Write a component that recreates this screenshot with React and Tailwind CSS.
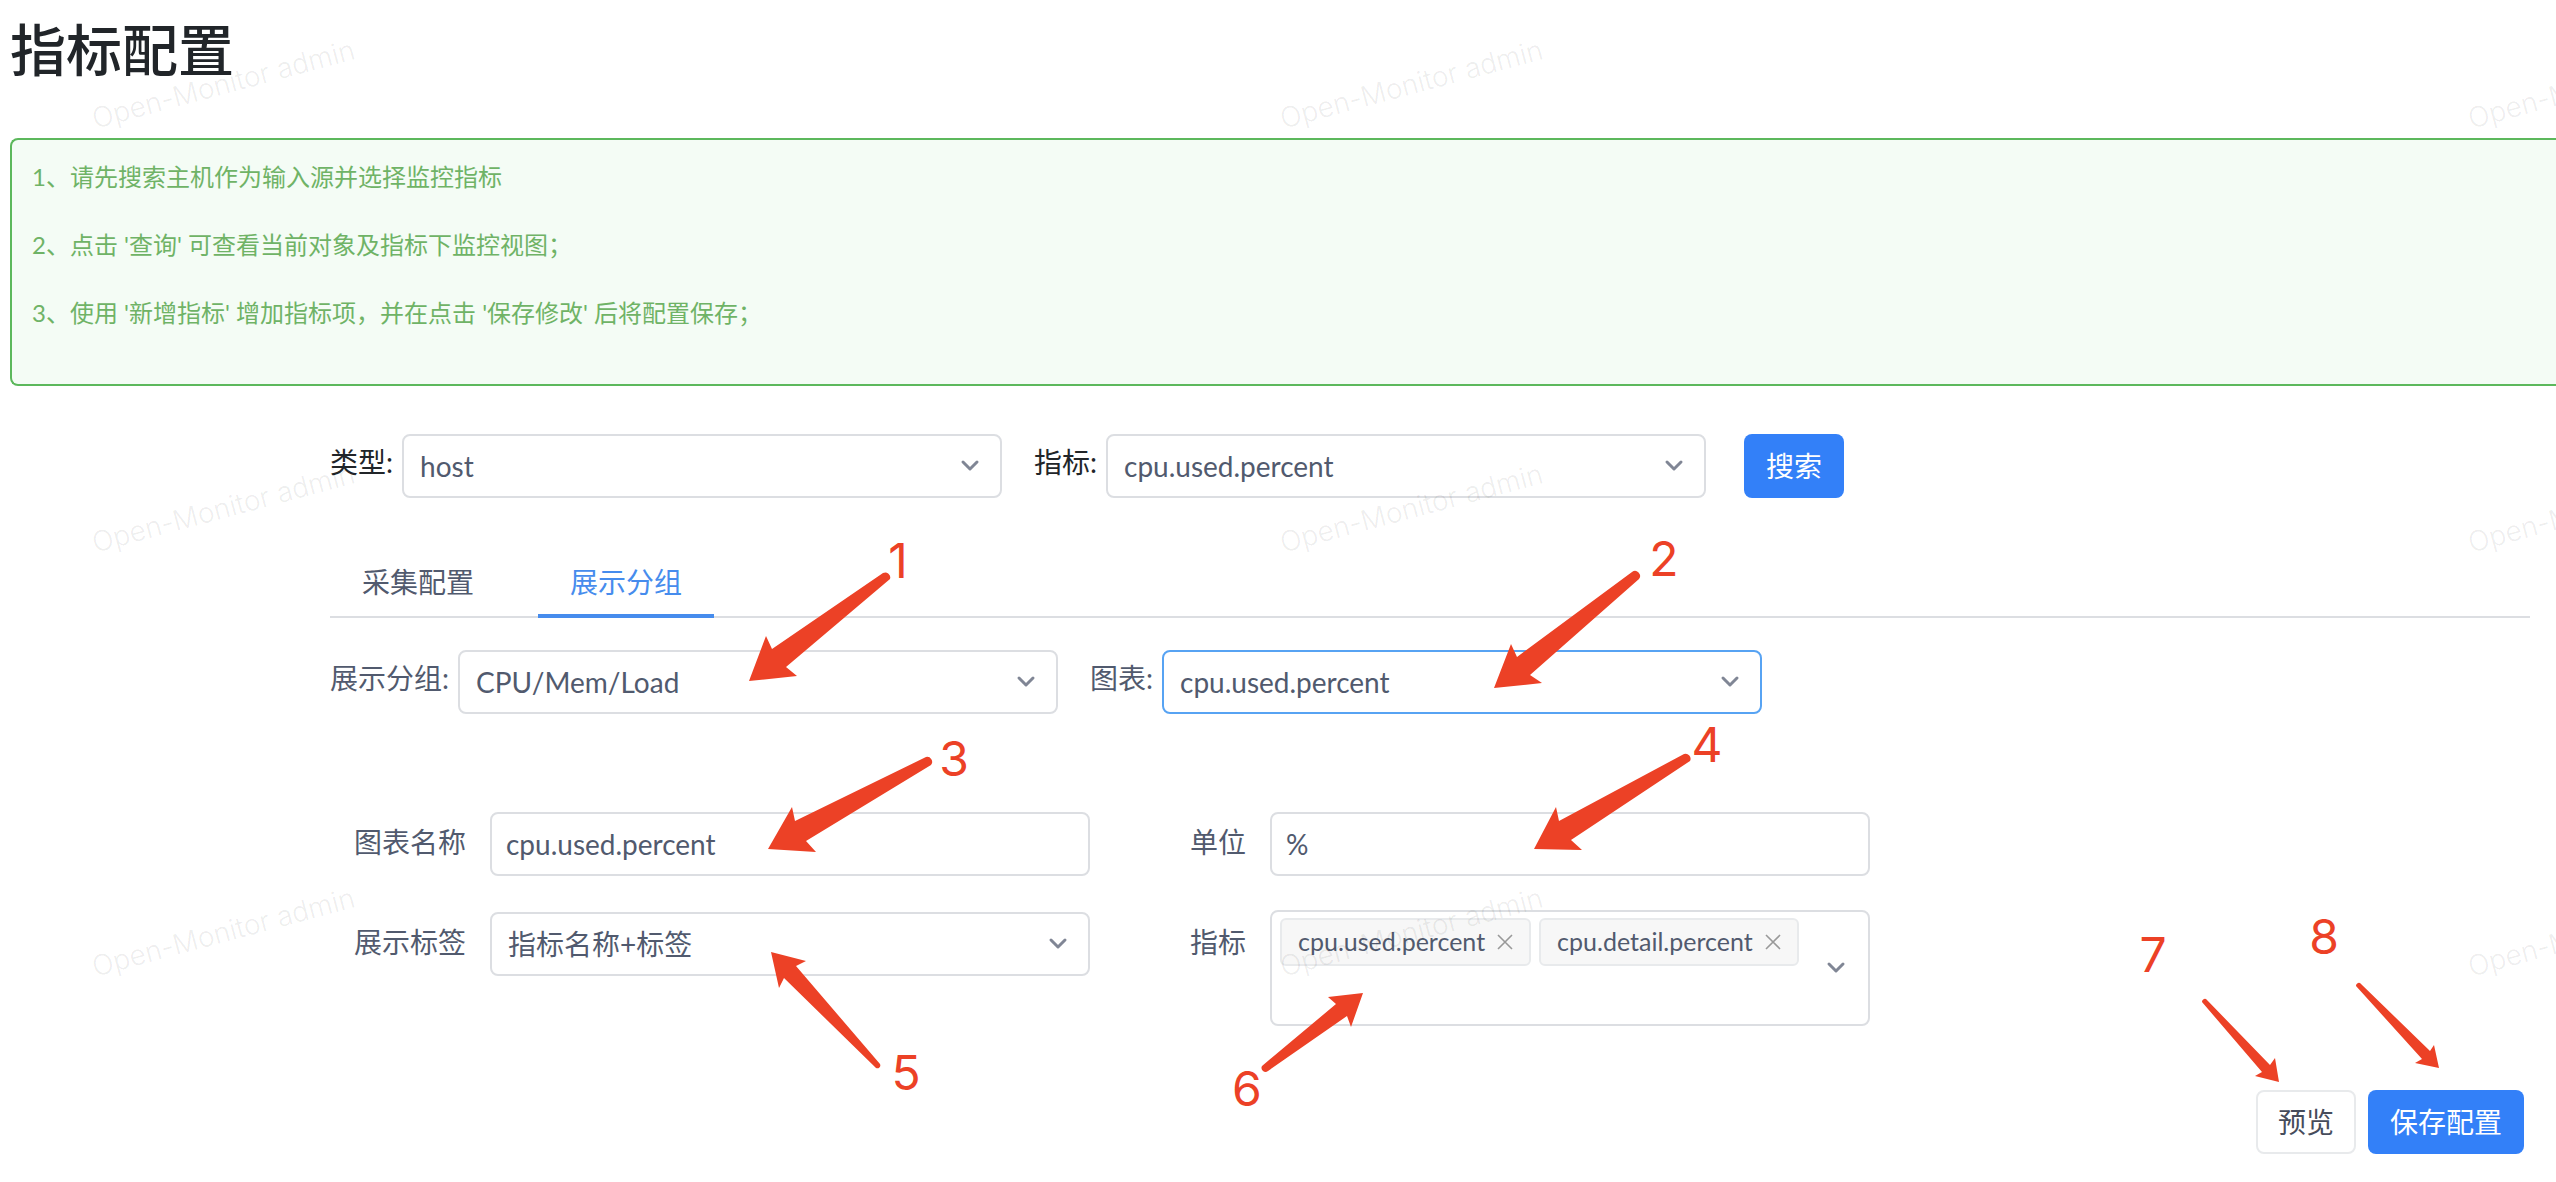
import { useState } from "react";

const hints = [
  "1、请先搜索主机作为输入源并选择监控指标",
  "2、点击 '查询' 可查看当前对象及指标下监控视图；",
  "3、使用 '新增指标' 增加指标项，并在点击 '保存修改' 后将配置保存；",
];

const arrows = [
  "M749 681 L766 636 L772 649 L883 573 A5 5 0 0 1 890 579 L786 667 L797 676 Z",
  "M1494 688 L1511 644 L1517 657 L1632 572 A5 5 0 0 1 1639 579 L1530 675 L1542 683 Z",
  "M768 849 L792 807 L795 821 L926 757 A5 5 0 0 1 931 765 L806 841 L816 852 Z",
  "M1534 849 L1556 807 L1559 821 L1684 754 A5 5 0 0 1 1690 761 L1571 840 L1582 850 Z",
  "M771 952 L806 961 L796 966 L880 1064 A3 3 0 0 1 876 1068 L784 978 L779 988 Z",
  "M1363 993 L1351 1027 L1347 1016 L1268 1071 A4 4 0 0 1 1262 1066 L1336 1004 L1328 997 Z",
  "M2279 1082 L2255 1076 L2262 1072 L2202 1002 A3 3 0 0 1 2206 999 L2270 1065 L2275 1058 Z",
  "M2439 1068 L2415 1063 L2422 1059 L2356 986 A3 3 0 0 1 2360 983 L2430 1051 L2434 1045 Z",
];

const marks = [
  [1, 898, 578],
  [2, 1664, 576],
  [3, 954, 776],
  [4, 1707, 762],
  [5, 906, 1090],
  [6, 1247, 1106],
  [7, 2153, 972],
  [8, 2324, 954],
];

function Chevron() {
  return (
    <svg
      className="pointer-events-none absolute top-1/2 right-[22px] h-4 w-5 -translate-y-1/2"
      viewBox="0 0 20 16"
      fill="none"
      stroke="#808695"
      strokeWidth="3"
      strokeLinecap="round"
      strokeLinejoin="round"
      aria-hidden="true"
    >
      <path d="M3 4 L10 11 L17 4" />
    </svg>
  );
}

function Select({ id, value, active }) {
  return (
    <div className="relative w-[600px]">
      <select
        id={id}
        defaultValue={value}
        className={
          "h-16 w-full appearance-none rounded-lg border-2 bg-white px-4 text-[28px] text-[#515a6e] outline-none " +
          (active ? "border-[#57a3f3]" : "border-[#dcdee2]")
        }
      >
        <option>{value}</option>
      </select>
      <Chevron />
    </div>
  );
}

function Tag({ text, onClose }) {
  return (
    <span className="flex h-12 items-center gap-3 rounded-md border-2 border-[#e8eaec] bg-[#f7f7f7] px-4 text-[25px] text-[#515a6e]">
      {text}
      <button type="button" aria-label={"移除 " + text} onClick={onClose}>
        <svg className="h-4 w-4" viewBox="0 0 16 16" stroke="#999" strokeWidth="1.6" aria-hidden="true">
          <path d="M1 1 L15 15 M15 1 L1 15" />
        </svg>
      </button>
    </span>
  );
}

function Watermark() {
  return (
    <div
      aria-hidden="true"
      className="pointer-events-none absolute inset-0 grid auto-rows-[424px] grid-cols-[repeat(3,1188px)] overflow-hidden"
    >
      {Array.from({ length: 9 }, (_, i) => (
        <div key={i} className="pt-[62px] pl-[88px]">
          <span className="inline-block -rotate-15 font-['Inter'] text-[28px] leading-10 font-light text-black/8">
            Open-Monitor admin
          </span>
        </div>
      ))}
    </div>
  );
}

function Annotations() {
  return (
    <svg
      className="pointer-events-none absolute top-0 left-0"
      width="2556"
      height="1182"
      viewBox="0 0 2556 1182"
      fill="#ec4126"
      aria-hidden="true"
    >
      {arrows.map((d) => (
        <path key={d} d={d} />
      ))}
      {marks.map(([n, x, y]) => (
        <text key={n} x={x} y={y} textAnchor="middle" className="font-['Inter'] text-5xl">
          {n}
        </text>
      ))}
    </svg>
  );
}

export default function App() {
  const [tags, setTags] = useState(["cpu.used.percent", "cpu.detail.percent"]);
  const [tab, setTab] = useState("展示分组");

  return (
    <main className="relative min-h-screen overflow-hidden bg-white pb-7 font-['Lato','Noto_Sans_CJK_SC',sans-serif] text-[28px] text-[#515a6e]">
      <h1 className="pt-4 pl-[10px] text-[56px] leading-[68px] font-medium text-[#212529]">指标配置</h1>

      <section className="mt-[54px] ml-[10px] h-[248px] rounded-l-lg border-2 border-r-0 border-[#5cb85c] bg-[#f4fcf5] pt-[19px] pl-5 text-2xl text-[#6fb366]">
        {hints.map((h) => (
          <p key={h} className="mb-8 leading-9">
            {h}
          </p>
        ))}
      </section>

      <div className="mt-12 mr-[26px] ml-[330px]">
        <div className="flex items-start text-[#212529]">
          <label htmlFor="type" className="mr-[9px] leading-[56px]">
            类型:
          </label>
          <Select id="type" value="host" />
          <label htmlFor="metric" className="mr-[9px] ml-8 leading-[56px]">
            指标:
          </label>
          <Select id="metric" value="cpu.used.percent" />
          <button type="button" className="ml-[38px] h-16 rounded-lg bg-[#3380f8] px-[22px] text-white">
            搜索
          </button>
        </div>

        <div role="tablist" className="mt-12 flex h-[72px] gap-8 border-b-2 border-[#dcdee2]">
          {["采集配置", "展示分组"].map((t) => (
            <button
              key={t}
              type="button"
              role="tab"
              aria-selected={t === tab}
              onClick={() => setTab(t)}
              className={
                "-mb-0.5 border-b-4 px-8 pt-1 " +
                (t === tab ? "border-[#468ced] text-[#468ced]" : "border-transparent")
              }
            >
              {t}
            </button>
          ))}
        </div>

        <div className="mt-8 flex items-start">
          <label htmlFor="group" className="mr-[9px] leading-[56px]">
            展示分组:
          </label>
          <Select id="group" value="CPU/Mem/Load" />
          <label htmlFor="chart" className="mr-[9px] ml-8 leading-[56px]">
            图表:
          </label>
          <Select id="chart" value="cpu.used.percent" active />
        </div>

        <form className="mt-[98px] grid grid-cols-[136px_600px_132px_600px] items-start gap-x-6 gap-y-9 pb-16">
          <label htmlFor="name" className="text-right leading-[60px]">
            图表名称
          </label>
          <input
            id="name"
            defaultValue="cpu.used.percent"
            className="h-16 rounded-lg border-2 border-[#dcdee2] bg-white px-3.5 outline-none"
          />
          <label htmlFor="unit" className="text-right leading-[60px]">
            单位
          </label>
          <input
            id="unit"
            defaultValue="%"
            className="h-16 rounded-lg border-2 border-[#dcdee2] bg-white px-3.5 outline-none"
          />
          <label htmlFor="legend" className="text-right leading-[60px]">
            展示标签
          </label>
          <Select id="legend" value="指标名称+标签" />
          <span id="metrics" className="text-right leading-[60px]">
            指标
          </span>
          <div
            role="group"
            aria-labelledby="metrics"
            className="relative -mt-0.5 flex h-[116px] items-start gap-2 rounded-lg border-2 border-[#dcdee2] p-1.5 pl-2"
          >
            {tags.map((t) => (
              <Tag key={t} text={t} onClose={() => setTags(tags.filter((x) => x !== t))} />
            ))}
            <Chevron />
          </div>
        </form>

        <div className="mr-1.5 flex justify-end gap-3">
          <button
            type="button"
            className="h-16 rounded-lg border-2 border-[#e8eaec] bg-white px-5 text-[#464c5b]"
          >
            预览
          </button>
          <button type="button" className="h-16 rounded-lg bg-[#3380f8] px-[22px] text-white">
            保存配置
          </button>
        </div>
      </div>

      <Watermark />
      <Annotations />
    </main>
  );
}
